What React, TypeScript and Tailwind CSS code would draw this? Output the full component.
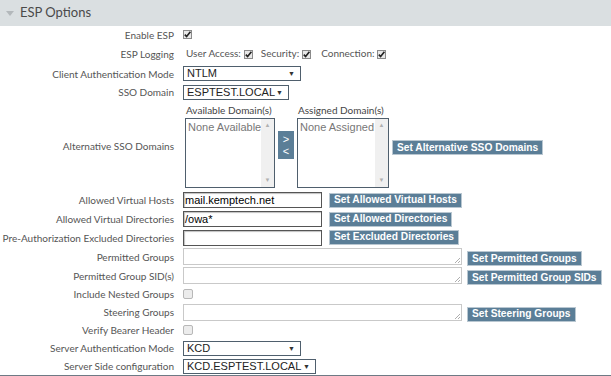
import React from "react";

const labelFont = { fontFamily: "Lato, 'Open Sans', sans-serif" };
const arial = { fontFamily: "'Liberation Sans', Arial, sans-serif" };

function Checked() {
  return (
    <span className="relative inline-block h-[9px] w-[9px] border border-[#8a8a8a] bg-[#e8e8e8] align-middle">
      <svg viewBox="0 0 9 9" className="absolute left-[-1px] top-[-1px] h-[9px] w-[9px]">
        <path d="M1.8 4.6 L3.6 6.6 L7.4 1.8" fill="none" stroke="#222" strokeWidth="1.6" />
      </svg>
    </span>
  );
}

function Unchecked() {
  return <span className="inline-block h-[10px] w-[10px] rounded-[2px] border border-[#b8b8b8] bg-[#ececec]" />;
}

function Select({ value, w }: { value: string; w: string }) {
  return (
    <div
      className={`flex h-[15px] items-center justify-between border border-[#4f5f6d] bg-white pl-[3px] pr-[5px] text-[11px] leading-none text-[#222] ${w}`}
      style={arial}
    >
      <span>{value}</span>
      <span className="text-[7px] text-[#333]">▼</span>
    </div>
  );
}

function Btn({ children }: { children: React.ReactNode }) {
  return (
    <span
      className="inline-flex h-[15px] items-center border border-[#b9c7d1] bg-[#5b7e97] px-[4px] text-[10.2px] font-bold leading-none whitespace-nowrap text-white"
      style={arial}
    >
      {children}
    </span>
  );
}

function TextInput({ value }: { value?: string }) {
  return (
    <div
      className="flex h-[16px] w-[139px] items-center border border-[#555] bg-white px-[1px] text-[11px] leading-none text-black shadow-[inset_1px_1px_1px_rgba(0,0,0,0.25)]"
      style={arial}
    >
      {value}
    </div>
  );
}

function TextArea() {
  return (
    <div className="relative h-[17px] w-[279px] border border-[#c9c9c9] bg-white">
      <svg viewBox="0 0 6 6" className="absolute bottom-[1px] right-[1px] h-[6px] w-[6px]">
        <path d="M6 1 L1 6 M6 4 L4 6" stroke="#999" strokeWidth="0.8" />
      </svg>
    </div>
  );
}

function ListBox({ text }: { text: string }) {
  return (
    <div className="flex h-[70px] border border-[#4f5f6d] bg-white">
      <div className="flex-1 pl-[2px] pt-[1px] text-[11px] leading-[14px] text-[#777] whitespace-nowrap" style={arial}>
        {text}
      </div>
      <div className="flex w-[13px] flex-col items-center justify-between bg-[#f0f0f0] py-[2px] text-[6px] text-[#b0b0b0]">
        <span>▲</span>
        <span>▼</span>
      </div>
    </div>
  );
}

function Row({ label, h, children }: { label: string; h: string; children?: React.ReactNode }) {
  return (
    <div className={`flex items-center ${h}`}>
      <div className="w-[175px] shrink-0 pr-[1px] text-right text-[10px] leading-none text-[#555]" style={labelFont}>
        {label}
      </div>
      <div className="ml-[8px] flex items-center gap-[7px]">{children}</div>
    </div>
  );
}

export default function App() {
  return (
    <div className="h-[376px] w-[611px] overflow-hidden bg-white">
      {/* Header */}
      <div className="flex h-[26px] items-center bg-[#dadfe1] pl-[6px]">
        <svg viewBox="0 0 8 5" className="h-[5px] w-[8px]">
          <path d="M0 0 L8 0 L4 5 Z" fill="#b3b8bb" />
        </svg>
        <span className="ml-[6px] text-[13px] text-[#4a4a4a]" style={labelFont}>
          ESP Options
        </span>
      </div>

      <Row label="Enable ESP" h="h-[17px]">
        <Checked />
      </Row>
      <Row label="ESP Logging" h="h-[21px]">
        <div className="flex items-center text-[10px] text-[#555]" style={labelFont}>
          <span className="ml-[3px]">User Access:</span>
          <span className="ml-[3px]"><Checked /></span>
          <span className="ml-[8px]">Security:</span>
          <span className="ml-[3px]"><Checked /></span>
          <span className="ml-[10px]">Connection:</span>
          <span className="ml-[2px]"><Checked /></span>
        </div>
      </Row>
      <Row label="Client Authentication Mode" h="h-[19px]">
        <Select value="NTLM" w="w-[118px]" />
      </Row>
      <Row label="SSO Domain" h="h-[18px]">
        <Select value="ESPTEST.LOCAL" w="w-[106px]" />
      </Row>
      <Row label="Alternative SSO Domains" h="h-[89px]">
        <div className="flex items-center">
          <div className="ml-[2px] flex w-[90px] flex-col">
            <span className="mb-[2px] pl-[1px] text-[10px] leading-[12px] text-[#444]" style={labelFont}>
              Available Domain(s)
            </span>
            <ListBox text="None Available" />
          </div>
          <div
            className="ml-[3px] mt-[-1px] flex h-[28px] w-[16px] flex-col items-center justify-center bg-[#5b7e97] text-[11px] leading-[12px] text-white"
            style={arial}
          >
            <span>&gt;</span>
            <span>&lt;</span>
          </div>
          <div className="ml-[3px] flex w-[92px] flex-col">
            <span className="mb-[2px] pl-[1px] text-[10px] leading-[12px] text-[#444]" style={labelFont}>
              Assigned Domain(s)
            </span>
            <ListBox text="None Assigned" />
          </div>
          <div className="ml-[3px] mt-[-2px]">
            <Btn>Set Alternative SSO Domains</Btn>
          </div>
        </div>
      </Row>
      <Row label="Allowed Virtual Hosts" h="h-[20px]">
        <TextInput value="mail.kemptech.net" />
        <Btn>Set Allowed Virtual Hosts</Btn>
      </Row>
      <Row label="Allowed Virtual Directories" h="h-[18px]">
        <TextInput value="/owa*" />
        <Btn>Set Allowed Directories</Btn>
      </Row>
      <Row label="Pre-Authorization Excluded Directories" h="h-[19px]">
        <TextInput />
        <Btn>Set Excluded Directories</Btn>
      </Row>
      <Row label="Permitted Groups" h="h-[19px]">
        <TextArea />
        <span className="-ml-[2px] mt-[-2px]">
          <Btn>Set Permitted Groups</Btn>
        </span>
      </Row>
      <Row label="Permitted Group SID(s)" h="h-[19px]">
        <TextArea />
        <span className="-ml-[2px] mt-[-2px]">
          <Btn>Set Permitted Group SIDs</Btn>
        </span>
      </Row>
      <Row label="Include Nested Groups" h="h-[18px]">
        <Unchecked />
      </Row>
      <Row label="Steering Groups" h="h-[18px]">
        <TextArea />
        <span className="-ml-[2px] mt-[-2px]">
          <Btn>Set Steering Groups</Btn>
        </span>
      </Row>
      <Row label="Verify Bearer Header" h="h-[18px]">
        <Unchecked />
      </Row>
      <Row label="Server Authentication Mode" h="h-[18px]">
        <Select value="KCD" w="w-[118px]" />
      </Row>
      <Row label="Server Side configuration" h="h-[18px]">
        <Select value="KCD.ESPTEST.LOCAL" w="w-[133px]" />
      </Row>
      <div className="h-[1px] bg-[#6e7a85]" />
    </div>
  );
}
